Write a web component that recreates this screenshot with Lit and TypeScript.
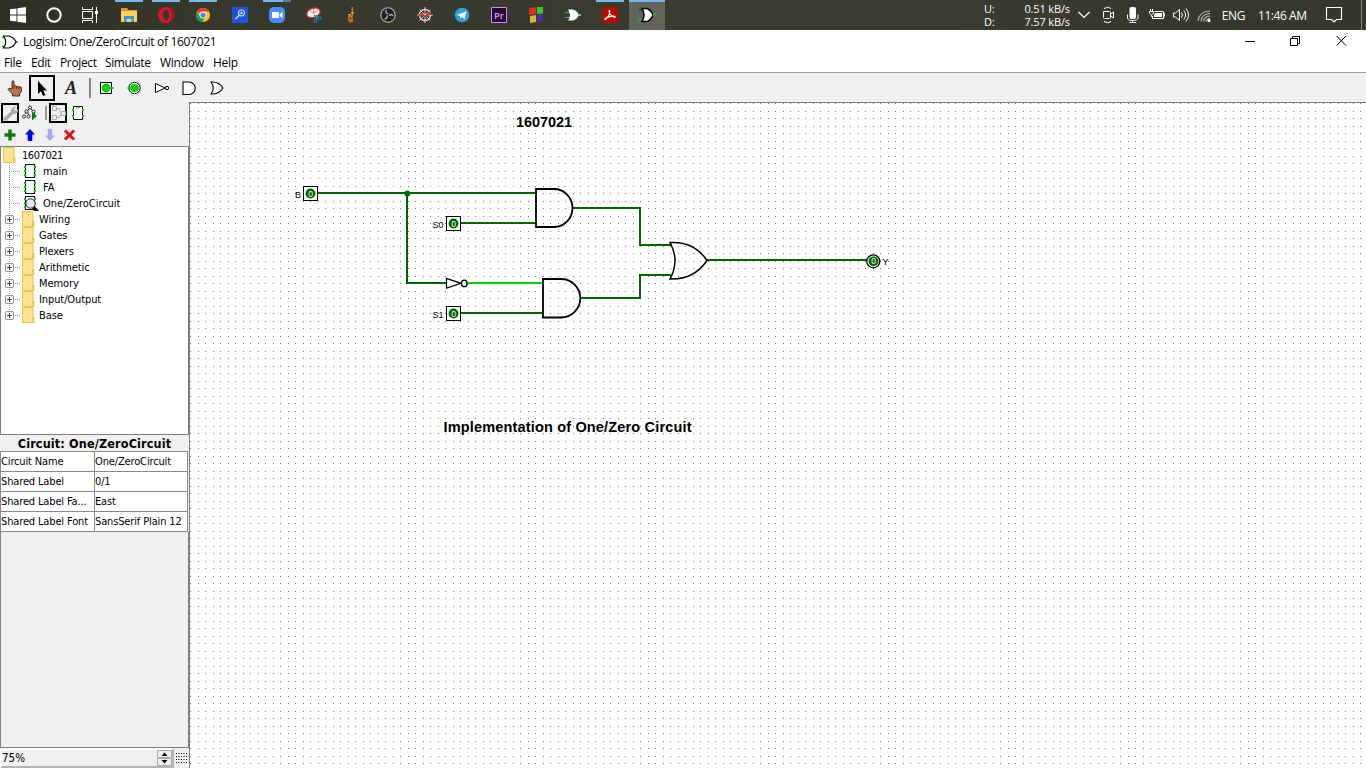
import { LitElement, html, svg, css } from "lit";
import { customElement } from "lit/decorators.js";
import { classMap } from "lit/directives/class-map.js";

const TASKS = [
  { id: "explorer", open: true }, { id: "opera", open: true }, { id: "chrome", open: true },
  { id: "search" }, { id: "zoom", open: true, multi: true }, { id: "snip" }, { id: "sax" },
  { id: "obs" }, { id: "wheel" }, { id: "telegram" }, { id: "premiere" }, { id: "blocks" },
  { id: "gate" }, { id: "acrobat", open: true }, { id: "logisim", open: true, active: true },
];

// Every glyph is drawn on a 16x16 canvas.
const ICONS: Record<string, unknown> = {
  start: svg`<path fill="#fff" d="M0 2.3 6.5 1.4V7.6H0zM7.4 1.2 16 0V7.6H7.4zM0 8.4H6.5V14.6L0 13.7zM7.4 8.4H16V16L7.4 14.8z"/>`,
  cortana: svg`<circle cx="8" cy="8" r="6.7" fill="none" stroke="#fff" stroke-width="2"/>`,
  taskview: svg`<path fill="none" stroke="#fff" d="M.5 0V2.5H10.5V0M.5 4.5H10.5V11.5H.5zM.5 16V13.5H10.5V16M14.5 0V16"/><path fill="#fff" d="M13 4h3v3h-3z"/>`,
  explorer: svg`<path fill="#d99a1c" d="M0 1h6l1.500 2H16v3H0z"/><path fill="#ffd45c" d="M0 4h16v11H0z"/><path fill="#3a94dc" d="M3 9h10v6h-2.700v-3H5.700v3H3z"/>`,
  opera: svg`<circle cx="8" cy="8" r="8" fill="#e3142a"/><path fill="#a50d1b" d="M11 1a8 8 0 0 1 0 14 10 10 0 0 0 0-14"/><ellipse cx="8" cy="8" rx="3.300" ry="5.500" fill="#38392c"/>`,
  chrome: svg`<circle cx="8" cy="8" r="7" fill="#fbc116"/><path fill="#e33b2e" d="M8 8 1.900 4.500A7 7 0 0 1 14.100 4.500H8z"/><path fill="#269a4b" d="M1.900 4.500A7 7 0 0 0 7.500 15L10.700 9.500 5.100 9.500z"/><circle cx="8" cy="8" r="3.500" fill="#fff"/><circle cx="8" cy="8" r="2.600" fill="#4285f4"/>`,
  search: svg`<path fill="#1d55d8" d="M0 0h16v16H0z"/><circle cx="9.500" cy="6" r="3" fill="none" stroke="#cfe0ff" stroke-width="1.100"/><circle cx="9.500" cy="6" r="1.200" fill="#cfe0ff"/><path stroke="#cfe0ff" stroke-width="1.400" d="M7 8.500 3.500 12"/>`,
  zoom: svg`<rect width="16" height="16" rx="5" fill="#4a8cff"/><path fill="#fff" d="M3 5h6q1 0 1 1v5H4q-1 0-1-1zM10.700 7 13.500 5v6l-2.800-2z"/>`,
  snip: svg`<ellipse cx="7.500" cy="5.800" rx="7" ry="4.600" fill="#f1eeee" stroke="#c4322b" stroke-width="1.300" transform="rotate(-20 7.500 6)"/><path fill="none" stroke="#d86a62" stroke-width=".8" d="M7.500 6.500 4 3.500M7.500 6.500 7.500 2M7.500 6.500 12 3"/><path fill="none" stroke="#2787bd" stroke-width="1.300" d="M8 8l4 3M11 8l-1 5"/><circle cx="13.500" cy="11" r="1.600" fill="none" stroke="#2787bd"/><circle cx="9.500" cy="14" r="1.500" fill="none" stroke="#2787bd"/>`,
  sax: svg`<path fill="none" stroke="#bd7415" stroke-width="1.600" d="M9.300 0V9M9 8V13Q8.500 15 6.500 14.500 5.500 13 6 10"/><path fill="#bd7415" d="M5 8.500h4v2H5zM6 12h4v3H6z"/><path fill="#dd9a27" d="M8 5h3v1.500H8zM5 7h3v1.500H5z"/>`,
  obs: svg`<circle cx="8" cy="8" r="7.200" fill="#1f1e24" stroke="#b5b5b8" stroke-width="1.100"/><g fill="#a5a5a9">${[0, 120, 240].map((a) => svg`<path transform="rotate(${a} 8 8)" d="M7.600 7.600Q4.500 6.500 5.300 3.300 5.800 2.500 6.800 2.800 6 5.500 8.500 6.500z"/>`)}</g>`,
  wheel: svg`<circle cx="8" cy="8" r="5.500" fill="none" stroke="#ddd" stroke-width="1.400"/><path stroke="#ddd" stroke-width=".9" d="M8 0v16M0 8h16M2.500 2.500l11 11M13.500 2.500l-11 11"/><path fill="none" stroke="#e4201c" stroke-width="1.600" d="M2 9q2-3 4-1t3 1 2-3 3 2"/>`,
  telegram: svg`<circle cx="8" cy="8" r="7.300" fill="#2ba0dc"/><path fill="#fff" d="M3 8 12.300 4.200 10.800 12.300 7.800 10 6.300 11.500 6 9z"/>`,
  premiere: svg`<path fill="#24062f" stroke="#d08aff" stroke-width="1" d="M.5.5h15v15H.5z"/><text x="8" y="11.600" text-anchor="middle" font-size="9.500" font-weight="600" font-family="Open Sans" fill="#df9dff">Pr</text>`,
  blocks: svg`<path fill="#e52a22" d="M1 1l7-1v7l-7 1z"/><path fill="#3fc22a" d="M9 0h6v6.500L9 7z"/><path fill="#d0bd24" d="M2 9l6-1v7l-6 1z"/><path fill="#472bc0" d="M9 8h6l-1 6-5 1z"/>`,
  gate: svg`<path stroke="#4fa98a" d="M0 5.500h6M0 10.500h6"/><path fill="#fff" d="M3 2.500H8Q12 3.500 14 8 12 12.500 8 13.500H3Q7 8 3 2.500z"/><path stroke="#7fe39b" stroke-width="1.600" d="M13.500 8H16"/>`,
  acrobat: svg`<rect width="16" height="16" rx="2.500" fill="#b30b00"/><path fill="none" stroke="#fff" stroke-width="1.200" d="M3.500 11.600C6 10.500 8 7 7.800 4.200 7.700 2.600 6.600 3.500 7.200 5.200 8 8 10 9.700 12.300 10.200 14 10.500 13 9 10.800 9.200 8 9.500 5.800 10 3.600 11.300 2.400 12.300 3.200 13 4 12z"/>`,
  logisim: svg`<path stroke="#0a6a0a" stroke-width="2" d="M0 3h5"/><path stroke="#00d000" stroke-width="2" d="M0 12.500h5"/><path fill="#fff" stroke="#000" stroke-width="1.500" d="M3 1.500h5Q12 3 14 8 12 13 8 14.500H3Q7 8 3 1.500z"/><path stroke="#0c0" stroke-width="2" d="M14 8h2.500"/>`,
  appgate: svg`<path stroke="#0b0" stroke-width="1.500" d="M0 3.500h4M0 12.500h4M13 8h3"/><path fill="#fff" stroke="#000" stroke-width="1.200" d="M1.500 2H7Q12 3.500 14 8 12 12.500 7 14H1.500Q6 8 1.500 2z"/>`,
  chevron: svg`<path fill="none" stroke="#fff" stroke-width="1.200" d="M2.500 5 8 10.500 13.500 5"/>`,
  meet: svg`<path fill="none" stroke="#fff" d="M3.500 4.500h6q1 0 1 1v5q0 1-1 1h-5q-1 0-1-1zM10.500 7l3-2v6l-3-2M4 1.500Q8-1 11 1.500M4 14.500Q8 17 11 14.500"/>`,
  mic: svg`<rect x="4.500" y="0" width="6.500" height="12" rx="2" fill="#fff"/><path fill="none" stroke="#fff" d="M2.500 7.500V11q0 2.500 5 2.500T13 11V7.500M7.500 13v3M4.500 15.500h6.500"/>`,
  battery: svg`<path fill="none" stroke="#fff" d="M5.500 4.500h9v7H3.500V9M15.500 6.500v3M.5 4.500h4v2q-2 3-4 0zM1.500 2v2M3.500 2v2M2.500 8v2"/><path fill="#fff" d="M6 6h7v4H5V8z"/>`,
  sound: svg`<path fill="none" stroke="#fff" d="M.5 6h2L6.500 2.500v11L2.500 10H.5zM8.500 5.500q2 2.500 0 5M10.800 3.500q3.500 4.500 0 9M13 1.500q5 6.500 0 13"/>`,
  wifi: svg`<path fill="none" stroke="#b8b9b0" stroke-width="1.200" d="M1 14Q2 4.500 13 4M4 14.500Q4.500 7 13 6.500M6.500 14.500Q7 9.500 13 9M9 14.500Q9.500 11.500 13 11.500"/><circle cx="12" cy="13.500" r="1.500" fill="#fff"/>`,
  note: svg`<path fill="none" stroke="#fff" stroke-width="1.100" d="M.5 .5h15v12H10.500L8 15 5.500 12.500H.5z"/>`,
  poke: svg`<path fill="#bd7653" stroke="#402015" stroke-width=".9" d="M5 9V1.500Q6 0 7 1.500V6Q8.500 5 9.500 6.500 11 5.500 12 7 14.500 6 14.500 8.500V11L12.500 14V16H5.500V14L1 9.500Q1.500 7.500 3.500 8.500z"/><path stroke="#402015" stroke-width=".8" d="M7 6v3M9.500 6v3M12 7v2.500"/>`,
  pointer: svg`<path fill="#000" d="M4 1V14L7 11.300 9 16 11.300 15 9.300 10.500H13z"/>`,
  pinin: svg`<path fill="#fff" stroke="#000" d="M1.500 2.500h11v11h-11z"/><circle cx="7" cy="8" r="4.400" fill="#00d000"/><path stroke="#00d000" stroke-width="2" d="M11 8h3.500"/>`,
  pinout: svg`<circle cx="7.500" cy="8" r="5.700" fill="#fff" stroke="#000"/><circle cx="7.500" cy="8" r="4.300" fill="#00d000"/><path stroke="#00d000" stroke-width="2" d="M.5 8h4"/>`,
  not: svg`<path fill="#fff" stroke="#000" d="M1.500 3.500V12.500L11 8z"/><circle cx="13" cy="8" r="1.700" fill="#fff" stroke="#000"/>`,
  and: svg`<path fill="#fff" stroke="#000" stroke-width="1.100" d="M1 2H7A6 6 0 0 1 7 14.500H1z"/>`,
  or: svg`<path fill="#fff" stroke="#000" stroke-width="1.100" d="M2 2Q10 1.500 14 8 10 14.500 2 14 6.500 8 2 2z"/>`,
  wrench: svg`<path fill="#aaa" d="M.5 13 8 6.500Q8 1.500 13 1.500L11 4 13 6 15.500 4Q15.500 9.500 10 9L3.500 15.500Q0 16 .5 13z"/>`,
  simulate: svg`<path fill="none" stroke="#222" d="M5 6 3 9M8 3 5 6M8 3l3 3M11 6l2 3M5 6l2 4"/><g fill="#fff" stroke="#222"><circle cx="8" cy="2.500" r="1.500"/><circle cx="4.500" cy="6.500" r="1.500"/><circle cx="11.500" cy="6.500" r="1.500"/><circle cx="2" cy="11.500" r="1.500"/><circle cx="6.500" cy="11.500" r="1.500"/></g><path fill="#087b0b" d="M10 7V15.500L15 11z"/>`,
  layout: svg`<path fill="none" stroke="#96cf96" d="M5 3.500h4v4h3M5 12.500h4v-3h3"/><path fill="#f2f2f2" stroke="#aaa" d="M1.500 1.500h4v4h-4zM1.500 10.500h4v4h-4zM10.500 6.500h4v4h-4z"/>`,
  appearance: svg`<path fill="#fff" stroke="#111" d="M3.500 1.500h9v13h-9z"/><path fill="none" stroke="#777" d="M6 2q2 2.500 4 0"/><path fill="#00c800" d="M2 4h2v2H2zM2 10h2v2H2zM12 4h2v2h-2zM12 10h2v2h-2z"/>`,
  add: svg`<path fill="#087b0b" d="M6.300 2.500h3.400v3.800h3.800v3.400H9.700v3.800H6.300V9.700H2.500V6.300h3.800z"/>`,
  up: svg`<path fill="#0000e6" d="M8 2 13 7.500H10.300V14H5.700V7.500H3z"/>`,
  down: svg`<path fill="#a8a8ea" d="M8 14 13 8.500H10.300V2H5.700V8.500H3z"/>`,
  remove: svg`<path stroke="#d91414" stroke-width="3" d="M3 3.500l9 9M12 3.500l-9 9"/>`,
  folder: svg`<path fill="#ffe391" stroke="#e9c34c" d="M.5 .5h10.500V10.500h1v5H.5z"/><path fill="none" stroke="#e9c34c" d="M12 10.500h-1.500v5"/>`,
  circuit: svg`<path fill="#fff" stroke="#111" stroke-width="1.200" d="M3.500 1.500h9v13h-9z"/><path fill="#00c800" d="M2 3h2v2H2zM2 7h2v2H2zM2 11h2v2H2zM12 3h2v2h-2zM12 7h2v2h-2zM12 11h2v2h-2z"/>`,
  viewed: svg`<path fill="#fff" stroke="#111" stroke-width="1.200" d="M3.500 1.500h9v13h-9z"/><path fill="#00c800" d="M2 3h2v2H2zM2 7h2v2H2zM2 11h2v2H2zM12 3h2v2h-2z"/><circle cx="8.500" cy="8.500" r="4.700" fill="#e8e8fb" stroke="#222"/><path fill="#000" d="M10 13.500 13 11.500 17 16H12z"/>`,
};

const icon = (id: string, cls = "") =>
  html`<svg class="icon ${cls}" viewBox="0 0 16 16" width="16" height="16">${ICONS[id]}</svg>`;

@customElement("task-bar")
class TaskBar extends LitElement {
  static styles = css`
    :host { display: flex; height: 30px; background: linear-gradient(90deg, #2e3025, #36382c 15%, #393b2e 60%, #35372b); color: #fff; font: 12px "Open Sans", sans-serif; }
    .icon { display: block; overflow: visible; }
    .fixed { width: 36px; display: grid; place-items: center; }
    .tasks { display: flex; gap: 1px; margin-left: 3px; }
    .task { width: 36px; display: grid; place-items: center; background: linear-gradient(#76b9ed, #76b9ed) no-repeat center top / 0 2px; }
    .open { background-size: 28px 2px; }
    .multi { background-image: linear-gradient(90deg, #76b9ed 71%, #557b99 71%); }
    .active { background: linear-gradient(#76b9ed 2px, #63645b 2px); }
    .speed { margin-left: auto; display: grid; grid-template-columns: 20px 66px; font-size: 11px; line-height: 13px; align-content: center; letter-spacing: -.15px; }
    .rate { text-align: right; }
    .tray { display: flex; align-items: center; padding-left: 6px; gap: 8.300px; }
    .lang { width: 24px; letter-spacing: -.3px; }
    .time { width: 52px; margin-left: 4px; letter-spacing: -.45px; white-space: nowrap; }
    .bell { width: 48px; display: grid; place-items: center; }
    .desk { width: 4px; margin-left: 3px; border-left: 1px solid #85867d; }
  `;
  render() {
    return html`
      <div class="fixed">${icon("start")}</div><div class="fixed">${icon("cortana")}</div><div class="fixed">${icon("taskview")}</div>
      <div class="tasks">${TASKS.map((t) => html`<div class=${classMap({ task: true, open: !!t.open, multi: !!t.multi, active: !!t.active })}>${icon(t.id)}</div>`)}</div>
      <div class="speed"><span>U:</span><span class="rate">0.51 kB/s</span><span>D:</span><span class="rate">7.57 kB/s</span></div>
      <div class="tray">${["chevron", "meet", "mic", "battery", "sound", "wifi"].map((i) => icon(i))}
        <span class="lang">ENG</span><span class="time">11:46 AM</span></div>
      <div class="bell">${icon("note")}</div>
      <div class="desk"></div>`;
  }
}

@customElement("circuit-canvas")
class CircuitCanvas extends LitElement {
  static styles = css`
    :host { display: block; overflow: hidden; background: #fff; }
    .sheet { display: block; }
    .wire { fill: none; stroke: #006400; stroke-width: 2; }
    .hot { stroke: #00d200; }
    .part { fill: #fff; stroke: #000; stroke-width: 1.8; }
    .hollow { fill: none; }
    .curve { stroke-width: 1.5; }
    .thin { stroke-width: 1.3; }
    .value { fill: #006400; }
    .digit { font: 8.500px "Liberation Sans", sans-serif; fill: #fff; }
    .pin { font: 9px "Liberation Sans", sans-serif; fill: #000; }
    .label { font: bold 14.500px "Liberation Sans", sans-serif; fill: #000; }
  `;
  render() {
    const input = (x: number, y: number) => svg`
      <rect class="part thin" x=${x - 7} y=${y - 7} width="14" height="14" shape-rendering="crispEdges"/>
      <circle class="value" cx=${x} cy=${y} r="4.900"/><text class="digit" x=${x - 2.2} y=${y + 3}>0</text>`;
    return html`<svg class="sheet" width="1176" height="665" viewBox="190 103 1176 665">
      <defs><pattern id="dots" x="190" y="103" width="15" height="15" patternUnits="userSpaceOnUse">
        <path fill="#7b7b7b" shape-rendering="crispEdges" d="M0 0h1v1H0zM8 0h1v1H8zM0 8h1v1H0zM8 8h1v1H8z"/></pattern></defs>
      <rect x="190" y="103" width="1176" height="665" fill="url(#dots)"/>
      <g shape-rendering="crispEdges">
        <path class="wire" d="M317 193H536M407 193V283H446M460 223H536M460 313H543M572 208H640V245H672M580 298H640V275H671M706 260H867"/>
        <path class="wire hot" d="M467 283H543"/>
      </g>
      <circle class="value" cx="407.300" cy="193.500" r="2.900"/>
      ${input(310.5, 193.5)}${input(453.5, 223.5)}${input(453.5, 313.5)}
      <path class="part hollow" d="M536 189H554A18.500 19 0 0 1 554 227H536Z"/>
      <path class="part hollow" d="M543 279H561A19 19 0 0 1 561 317.500H543Z"/>
      <path class="part thin" d="M446.500 278.500V288L461 283.300Z"/>
      <ellipse class="part thin" cx="464.300" cy="283.400" rx="2.800" ry="3.300"/>
      <path class="part hollow curve" d="M670 242.500C686 241.500 698 247 707 260.500C698 274 686 279.500 670 279Q680 260.500 670 242.500Z"/>
      <circle class="part thin" cx="873.300" cy="261.300" r="6.500"/><circle class="value" cx="873.500" cy="261.300" r="4.900"/>
      <text class="digit" x="871.300" y="264.300">0</text>
      <text class="pin" x="295" y="198">B</text><text class="pin" x="432.500" y="228">S0</text><text class="pin" x="432.500" y="318">S1</text><text class="pin" x="882.500" y="265">Y</text>
      <text class="label" x="516" y="127" textLength="56">1607021</text>
      <text class="label" x="443.500" y="432" textLength="248">Implementation of One/Zero Circuit</text>
    </svg>`;
  }
}

@customElement("app-root")
class AppRoot extends LitElement {
  static styles = css`
    :host { display: flex; flex-direction: column; width: 1366px; height: 768px; overflow: hidden; background: #f0f0f0; color: #000; font: 11px "DejaVu Sans Condensed", "DejaVu Sans", sans-serif; font-stretch: condensed; }
    .icon { display: block; flex: none; overflow: visible; }
    .title { display: flex; align-items: center; height: 23px; background: #fff; padding-left: 2px; font: 12px "Open Sans", sans-serif; letter-spacing: -.31px; }
    .caption { margin-left: 5px; }
    .controls { margin-left: auto; margin-right: 19px; margin-bottom: 4px; }
    .menu { display: flex; align-items: center; height: 19px; background: #fff; border-bottom: 1px solid #a0a0a0; font: 12px "Open Sans", sans-serif; }
    .tools { display: flex; align-items: center; height: 29px; padding-left: 7px; box-sizing: border-box; }
    .picked { display: grid; place-items: center; width: 26px; height: 26px; box-sizing: border-box; border: 2px solid #000; margin: 0 8px 0 6px; }
    .text { width: 16px; font: italic bold 18px/20px "Liberation Serif", serif; text-align: center; color: #222; }
    .sep { width: 2px; height: 20px; background: #888; margin: 0 8px 0 10px; }
    .shape { margin-right: 11.500px; }
    .main { flex: 1; display: grid; grid-template-columns: 189px 1177px; min-height: 0; }
    .canvas { border-top: 1px solid #7a808a; border-left: 1px solid #7a808a; }
    .side { display: flex; flex-direction: column; min-height: 0; }
    .views { display: flex; align-items: center; height: 22px; padding-left: 1px; }
    .view { display: grid; place-items: center; width: 18px; height: 20px; box-sizing: border-box; border: 2px solid #000; }
    .gap { margin: 0 0 0 3px; }
    .bar { width: 2px; height: 14px; background: #999; margin: 0 2px 0 7px; }
    .edit { display: flex; align-items: center; gap: 4px; height: 22px; padding-left: 2px; }
    .tree { height: 287px; border: 1px solid #7a808a; background: #fff; }
    .row { display: flex; align-items: center; height: 16px; }
    .root { padding-left: 2px; }
    .stem { width: 21px; height: 16px; flex: none; }
    .name { margin-left: 1px; white-space: nowrap; letter-spacing: -.1px; }
    .root .name { margin-left: 3px; letter-spacing: -.45px; }
    .leaf { margin-left: 5px; letter-spacing: -.05px; }
    .heading { height: 16px; text-align: center; font: bold 12.500px/17px "DejaVu Sans Condensed", "DejaVu Sans", sans-serif; font-stretch: condensed; letter-spacing: .15px; }
    .props { display: grid; grid-template-columns: 93px 92px; gap: 1px; border: 1px solid #888; background: #888; width: 186px; box-sizing: content-box; }
    .cell { height: 19px; line-height: 20px; background: #fff; white-space: nowrap; overflow: hidden; letter-spacing: -.14px; }
    .rest { flex: 1; border: solid #7a808a; border-width: 0 1px 1px 1px; }
    .zoombar { display: flex; height: 20px; }
    .zoom { width: 174px; box-sizing: border-box; border: 2px solid #b4b4b4; border-top-color: #fff; border-left-color: #fff; display: flex; justify-content: space-between; align-items: center; }
    .percent { font-size: 11.500px; }
    .spin { display: block; }
  `;
  render() {
    const stem = (kind: string) => html`<svg class="stem" width="21" height="16">
      <path fill="none" stroke="#909090" stroke-dasharray="1 1" d=${kind === "last" ? "M8.500 0V8M8 8.500H20" : "M8.500 0V16M8 8.500H20"}/>
      ${kind === "leaf" ? null : svg`<rect x="4.500" y="4.500" width="8" height="8" rx="1" fill="#f5f5f5" stroke="#919191"/><path stroke="#30478e" d="M6 8.500h5M8.500 6v5"/>`}</svg>`;
    const menus: [string, number, number][] = [["File", 4, 18], ["Edit", 31, 20], ["Project", 60, 37], ["Simulate", 105, 46], ["Window", 160, 44], ["Help", 213, 25]];
    const folders = ["Wiring", "Gates", "Plexers", "Arithmetic", "Memory", "Input/Output", "Base"];
    const props = ["Circuit Name", "One/ZeroCircuit", "Shared Label", "0/1", "Shared Label Fa...", "East", "Shared Label Font", "SansSerif Plain 12"];
    return html`
      <task-bar></task-bar>
      <div class="title">${icon("appgate")}<span class="caption">Logisim: One/ZeroCircuit of 1607021</span>
        <svg class="controls" width="103" height="14" fill="none" stroke="#000"><path d="M1 8.500H11M46.500 5.500h7v7h-7zM48.500 5V3.500h7v7H54M92.500 3l9.500 9.500M102 3l-9.500 9.500"/></svg></div>
      <svg class="menu" width="1366" height="19"><g font-size="12">${menus.map(([m, x, w]) => svg`<text x=${x} y="14" textLength=${w}>${m}</text>`)}</g></svg>
      <div class="tools">${icon("poke")}<div class="picked">${icon("pointer")}</div><span class="text">A</span><i class="sep"></i>
        ${["pinin", "pinout", "not", "and", "or"].map((i) => icon(i, "shape"))}</div>
      <div class="main">
        <div class="side">
          <div class="views"><div class="view">${icon("wrench")}</div>${icon("simulate", "gap")}<i class="bar"></i><div class="view">${icon("layout")}</div>${icon("appearance", "gap")}</div>
          <div class="edit">${["add", "up", "down", "remove"].map((i) => icon(i))}</div>
          <div class="tree">
            <div class="row root">${icon("folder")}<span class="name">1607021</span></div>
            ${[["main", "circuit"], ["FA", "circuit"], ["One/ZeroCircuit", "viewed"]].map(([n, i]) => html`<div class="row">${stem("leaf")}${icon(i)}<span class="name leaf">${n}</span></div>`)}
            ${folders.map((n, i) => html`<div class="row">${stem(i === 6 ? "last" : "folder")}${icon("folder")}<span class="name">${n}</span></div>`)}
          </div>
          <div class="heading">Circuit: One/ZeroCircuit</div>
          <div class="props">${props.map((p) => html`<div class="cell">${p}</div>`)}</div>
          <div class="rest"></div>
          <div class="zoombar"><div class="zoom"><span class="percent">75%</span>
            <svg class="spin" width="15" height="16"><path fill="#f0f0f0" stroke="#aaa" d="M.5 .5h14v7H.5zM.5 8.500h14v7H.5z"/><path d="M7.500 2.500 10.500 6h-6zM7.500 13.500l3-3.500h-6z"/></svg></div>
            <svg width="15" height="18"><path stroke="#000" stroke-dasharray="1 1.500" d="M2 5.500H13M2 8.500H13M2 11.500H13M2 14.500H13"/></svg></div>
        </div>
        <circuit-canvas class="canvas"></circuit-canvas>
      </div>`;
  }
}
